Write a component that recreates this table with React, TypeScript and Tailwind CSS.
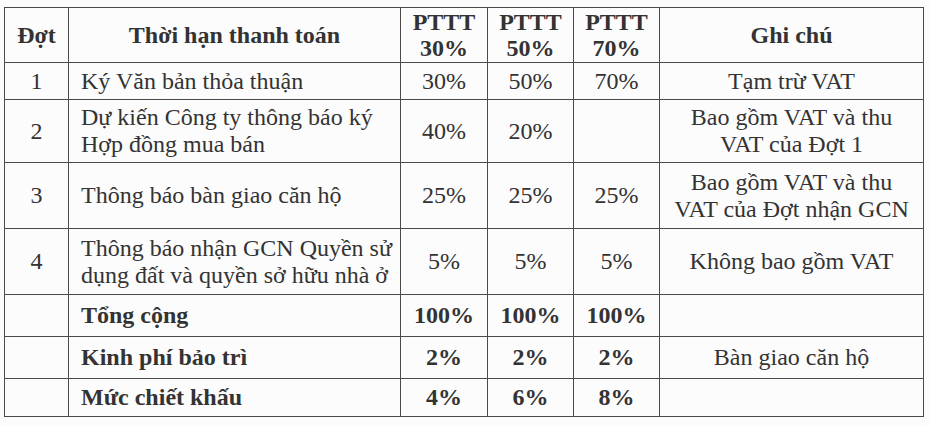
import React from 'react';

type Row = {
  dot: string;
  label: React.ReactNode;
  p30: string;
  p50: string;
  p70: string;
  note: React.ReactNode;
  bold?: boolean;
  h: string;
};

const rows: Row[] = [
  { dot: '1', label: 'Ký Văn bản thỏa thuận', p30: '30%', p50: '50%', p70: '70%', note: 'Tạm trừ VAT', h: 'h-[37px]' },
  {
    dot: '2',
    label: (
      <>
        Dự kiến Công ty thông báo ký
        <br />
        Hợp đồng mua bán
      </>
    ),
    p30: '40%',
    p50: '20%',
    p70: '',
    note: (
      <>
        Bao gồm VAT và thu
        <br />
        VAT của Đợt 1
      </>
    ),
    h: 'h-[63px]',
  },
  {
    dot: '3',
    label: 'Thông báo bàn giao căn hộ',
    p30: '25%',
    p50: '25%',
    p70: '25%',
    note: (
      <>
        Bao gồm VAT và thu
        <br />
        VAT của Đợt nhận GCN
      </>
    ),
    h: 'h-[66px]',
  },
  {
    dot: '4',
    label: (
      <>
        Thông báo nhận GCN Quyền sử
        <br />
        dụng đất và quyền sở hữu nhà ở
      </>
    ),
    p30: '5%',
    p50: '5%',
    p70: '5%',
    note: 'Không bao gồm VAT',
    h: 'h-[66px]',
  },
  { dot: '', label: 'Tổng cộng', p30: '100%', p50: '100%', p70: '100%', note: '', bold: true, h: 'h-[42px]' },
  { dot: '', label: 'Kinh phí bảo trì', p30: '2%', p50: '2%', p70: '2%', note: 'Bàn giao căn hộ', bold: true, h: 'h-[42px]' },
  { dot: '', label: 'Mức chiết khấu', p30: '4%', p50: '6%', p70: '8%', note: '', bold: true, h: 'h-[38px]' },
];

const cell = 'border border-[#4a4a4a] p-0 align-middle';

const App: React.FC = () => {
  return (
    <div className="w-[930px] h-[426px] bg-[#fcfcfc] pt-[7px] pl-[4px]">
      <table className="border-collapse table-fixed w-[919px] border-[1.5px] border-[#4a4a4a] text-[#333333] font-[family-name:Liberation_Serif,serif] text-[24px] leading-[27px]">
        <colgroup>
          <col className="w-[64px]" />
          <col className="w-[332px]" />
          <col className="w-[87px]" />
          <col className="w-[86px]" />
          <col className="w-[86px]" />
          <col className="w-[264px]" />
        </colgroup>
        <thead>
          <tr className="h-[55px] font-bold">
            <th className={`${cell} text-center`}>Đợt</th>
            <th className={`${cell} text-center`}>Thời hạn thanh toán</th>
            <th className={`${cell} text-center leading-[26px]`}>
              PTTT
              <br />
              30%
            </th>
            <th className={`${cell} text-center leading-[26px]`}>
              PTTT
              <br />
              50%
            </th>
            <th className={`${cell} text-center leading-[26px]`}>
              PTTT
              <br />
              70%
            </th>
            <th className={`${cell} text-center`}>Ghi chú</th>
          </tr>
        </thead>
        <tbody>
          {rows.map((r, i) => (
            <tr key={i} className={r.h}>
              <td className={`${cell} text-center`}>{r.dot}</td>
              <td className={`${cell} pl-[12px] text-left whitespace-nowrap ${r.bold ? 'font-bold' : ''}`}>{r.label}</td>
              <td className={`${cell} text-center ${r.bold ? 'font-bold' : ''}`}>{r.p30}</td>
              <td className={`${cell} text-center ${r.bold ? 'font-bold' : ''}`}>{r.p50}</td>
              <td className={`${cell} text-center ${r.bold ? 'font-bold' : ''}`}>{r.p70}</td>
              <td className={`${cell} text-center whitespace-nowrap`}>{r.note}</td>
            </tr>
          ))}
        </tbody>
      </table>
    </div>
  );
};

export default App;
